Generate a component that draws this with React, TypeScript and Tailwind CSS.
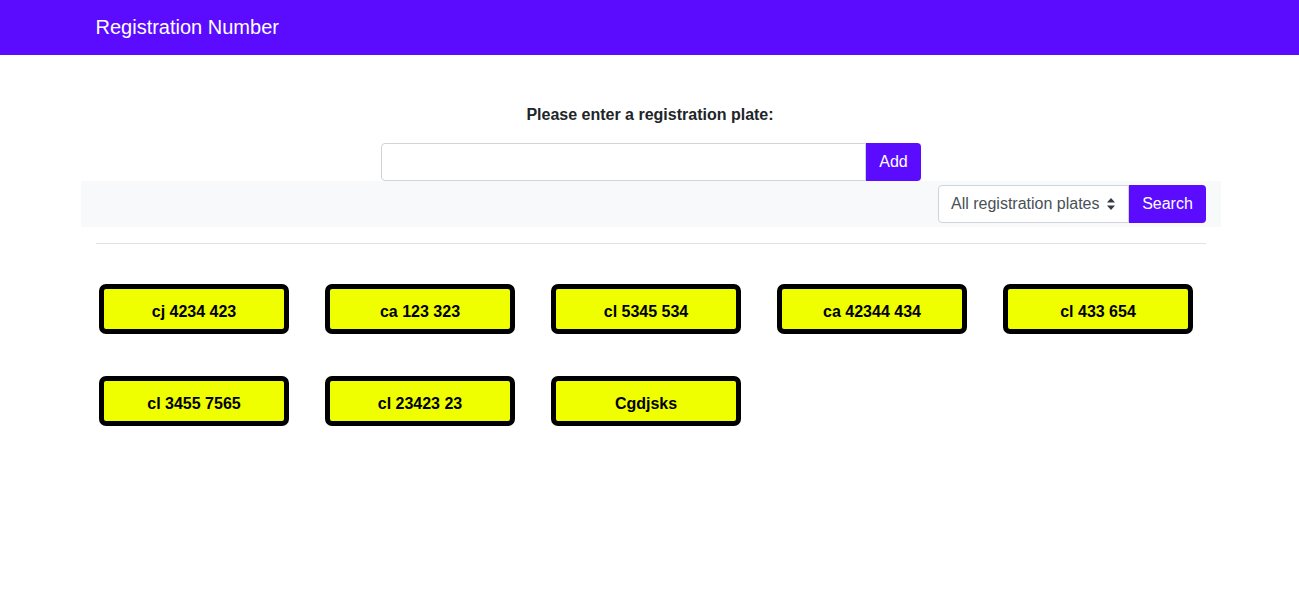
import React from "react";

const plates = [
  "cj 4234 423",
  "ca 123 323",
  "cl 5345 534",
  "ca 42344 434",
  "cl 433 654",
  "cl 3455 7565",
  "cl 23423 23",
  "Cgdjsks",
];

const App = () => {
  return (
    <div className="min-h-screen bg-white text-[#212529] font-['Liberation_Sans',Arial,sans-serif]">
      <nav className="h-[55px] bg-[#5b0cff]">
        <div className="mx-auto w-[1140px] px-4 pb-[2px] h-full flex items-center">
          <span className="text-white text-[20px]">Registration Number</span>
        </div>
      </nav>

      <div className="ml-[81px] w-[1140px]">
        <h5 className="mt-[48px] pr-[2px] text-center font-bold text-[16px] leading-[24px]">
          Please enter a registration plate:
        </h5>

        <div className="mt-[16px] flex justify-center">
          <div className="flex w-[540px] h-[38px]">
            <input
              type="text"
              className="flex-1 border border-[#ced4da] rounded-l-[4px] px-3 outline-none"
            />
            <button className="w-[55px] bg-[#5b0cff] text-white text-[16px] rounded-r-[4px]">
              Add
            </button>
          </div>
        </div>

        <div className="h-[46px] bg-[#f8f9fa] flex items-center justify-end pr-[15px]">
          <div className="flex h-[38px]">
            <div className="w-[191px] border border-[#ced4da] rounded-l-[4px] bg-white flex items-center justify-between pl-3 pr-[13px] text-[16px] text-[#495057]">
              <span>All registration plates</span>
              <svg width="8" height="12" viewBox="0 0 8 12">
                <path d="M4 0 L8 4.5 H0 Z" fill="#343a40" />
                <path d="M4 12 L8 7.5 H0 Z" fill="#343a40" />
              </svg>
            </div>
            <button className="w-[77px] bg-[#5b0cff] text-white text-[16px] rounded-r-[4px]">
              Search
            </button>
          </div>
        </div>

        <div className="px-[15px] mt-[16px]">
          <hr className="border-t border-[#dee2e6]" />
        </div>

        <div className="mt-[40px] pl-[18px] flex flex-wrap gap-x-[36px] gap-y-[42px]">
          {plates.map((plate) => (
            <div
              key={plate}
              className="w-[190px] h-[50px] pt-[6px] bg-[#efff00] border-[5px] border-black rounded-[7px] flex items-center justify-center font-bold text-[16px] text-black"
            >
              {plate}
            </div>
          ))}
        </div>
      </div>
    </div>
  );
};

export default App;
